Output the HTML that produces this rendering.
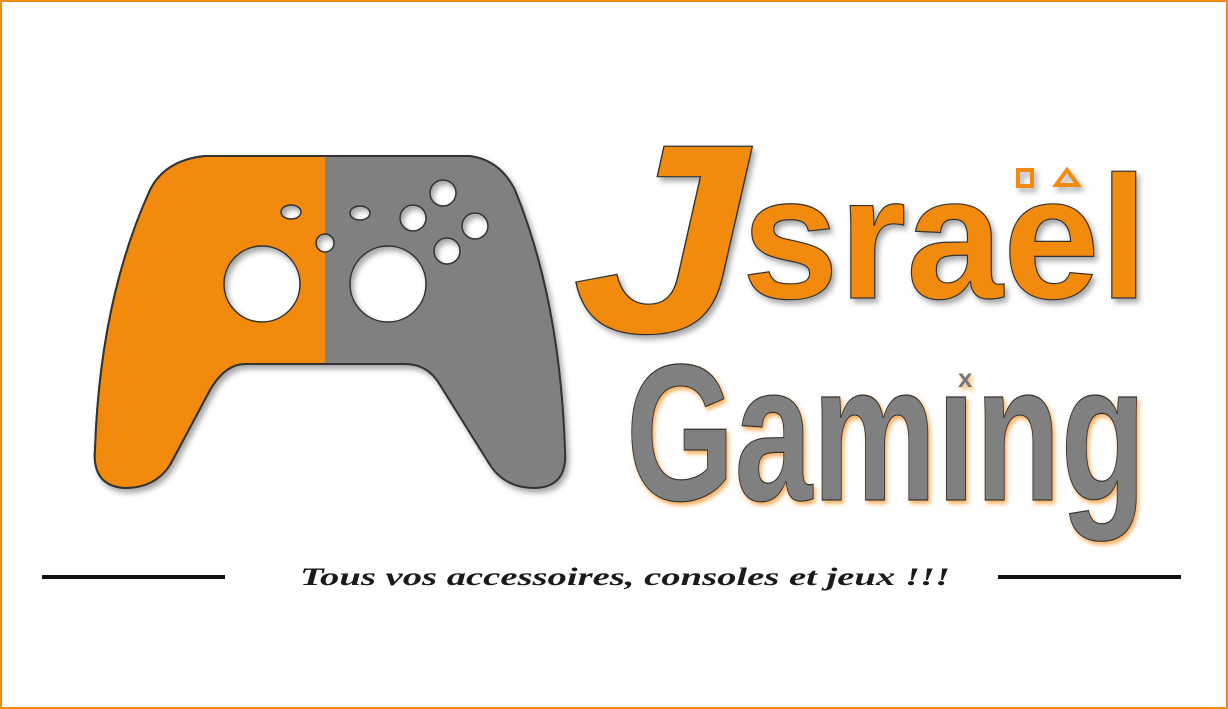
<!DOCTYPE html>
<html><head><meta charset="utf-8"><style>
html,body{margin:0;padding:0;background:#fff;}
.w{width:1224px;height:705px;border:2px solid #f28a0f;position:relative;overflow:hidden;background:#fff}
</style></head><body><div class="w">
<svg width="1224" height="705" viewBox="2 2 1224 705" xmlns="http://www.w3.org/2000/svg">
<defs>
<filter id="sh" x="-10%" y="-10%" width="130%" height="130%"><feDropShadow dx="3" dy="4" stdDeviation="3" flood-color="#000" flood-opacity="0.35"/></filter>
<filter id="sho" x="-10%" y="-10%" width="130%" height="130%"><feDropShadow dx="2" dy="3" stdDeviation="2" flood-color="#f28a0f" flood-opacity="0.7"/></filter>
<mask id="holes">
<rect x="0" y="0" width="1228" height="709" fill="#fff"/>
<circle cx="262" cy="284" r="38" fill="#000"/>
<circle cx="388" cy="284" r="38" fill="#000"/>
<ellipse cx="291" cy="212" rx="10" ry="7" fill="#000"/>
<ellipse cx="360" cy="213" rx="10" ry="7" fill="#000"/>
<circle cx="325" cy="243" r="9" fill="#000"/>
<circle cx="443" cy="193" r="13" fill="#000"/>
<circle cx="413" cy="218" r="13" fill="#000"/>
<circle cx="475" cy="226" r="13" fill="#000"/>
<circle cx="447" cy="251" r="13" fill="#000"/>
</mask>
<clipPath id="lc"><rect x="0" y="0" width="325" height="709"/></clipPath>
</defs>
<g filter="url(#sh)">
<g mask="url(#holes)">
<path d="M205,156 L470,156 Q500,160 515,190 Q560,300 565,450 Q568,487 535,488 Q505,488 490,465 L440,385 Q428,364 405,364 L245,364 Q225,364 210,390 L170,465 Q155,488 125,488 Q92,486 95,450 Q100,300 150,190 Q165,160 205,156 Z" fill="#808080" stroke="#333" stroke-width="2"/>
<path d="M205,156 L470,156 Q500,160 515,190 Q560,300 565,450 Q568,487 535,488 Q505,488 490,465 L440,385 Q428,364 405,364 L245,364 Q225,364 210,390 L170,465 Q155,488 125,488 Q92,486 95,450 Q100,300 150,190 Q165,160 205,156 Z" fill="#f28a0f" stroke="#333" stroke-width="2" clip-path="url(#lc)"/>
</g>
<g fill="none" stroke="#333" stroke-width="1.5">
<circle cx="262" cy="284" r="38"/><circle cx="388" cy="284" r="38"/>
<ellipse cx="291" cy="212" rx="10" ry="7"/><ellipse cx="360" cy="213" rx="10" ry="7"/>
<circle cx="325" cy="243" r="9"/><circle cx="443" cy="193" r="13"/><circle cx="413" cy="218" r="13"/><circle cx="475" cy="226" r="13"/><circle cx="447" cy="251" r="13"/>
</g>
</g>
<g filter="url(#sh)" font-family="Liberation Sans, sans-serif" font-weight="bold" fill="#f28a0f" stroke="#333" stroke-width="1.2">
<text x="572" y="332" font-style="italic" font-size="270" textLength="175" lengthAdjust="spacingAndGlyphs">J</text>
<text x="742" y="298" font-size="175" textLength="406" lengthAdjust="spacingAndGlyphs">srael</text>
<rect x="1018" y="170" width="14" height="16" fill="none" stroke="#f28a0f" stroke-width="4"/>
<path d="M1067,170 L1078,185 L1056,185 Z" fill="none" stroke="#f28a0f" stroke-width="4"/>
</g>
<g filter="url(#sho)" font-family="Liberation Sans, sans-serif" font-weight="bold" fill="#808080" stroke="#333" stroke-width="1.2">
<text x="626" y="500" font-size="195" textLength="520" lengthAdjust="spacingAndGlyphs">Gamıng</text>
<text x="958" y="387" font-size="26" fill="#777" stroke="none">x</text>
</g>
<text x="625" y="585" text-anchor="middle" font-family="Liberation Serif, serif" font-style="italic" font-weight="bold" font-size="25" fill="#1a1a1a" textLength="650" lengthAdjust="spacingAndGlyphs">Tous vos accessoires, consoles et jeux !!!</text>
<rect x="42" y="575" width="183" height="4" fill="#111"/>
<rect x="998" y="575" width="183" height="4" fill="#111"/>
</svg>
</div></body></html>
